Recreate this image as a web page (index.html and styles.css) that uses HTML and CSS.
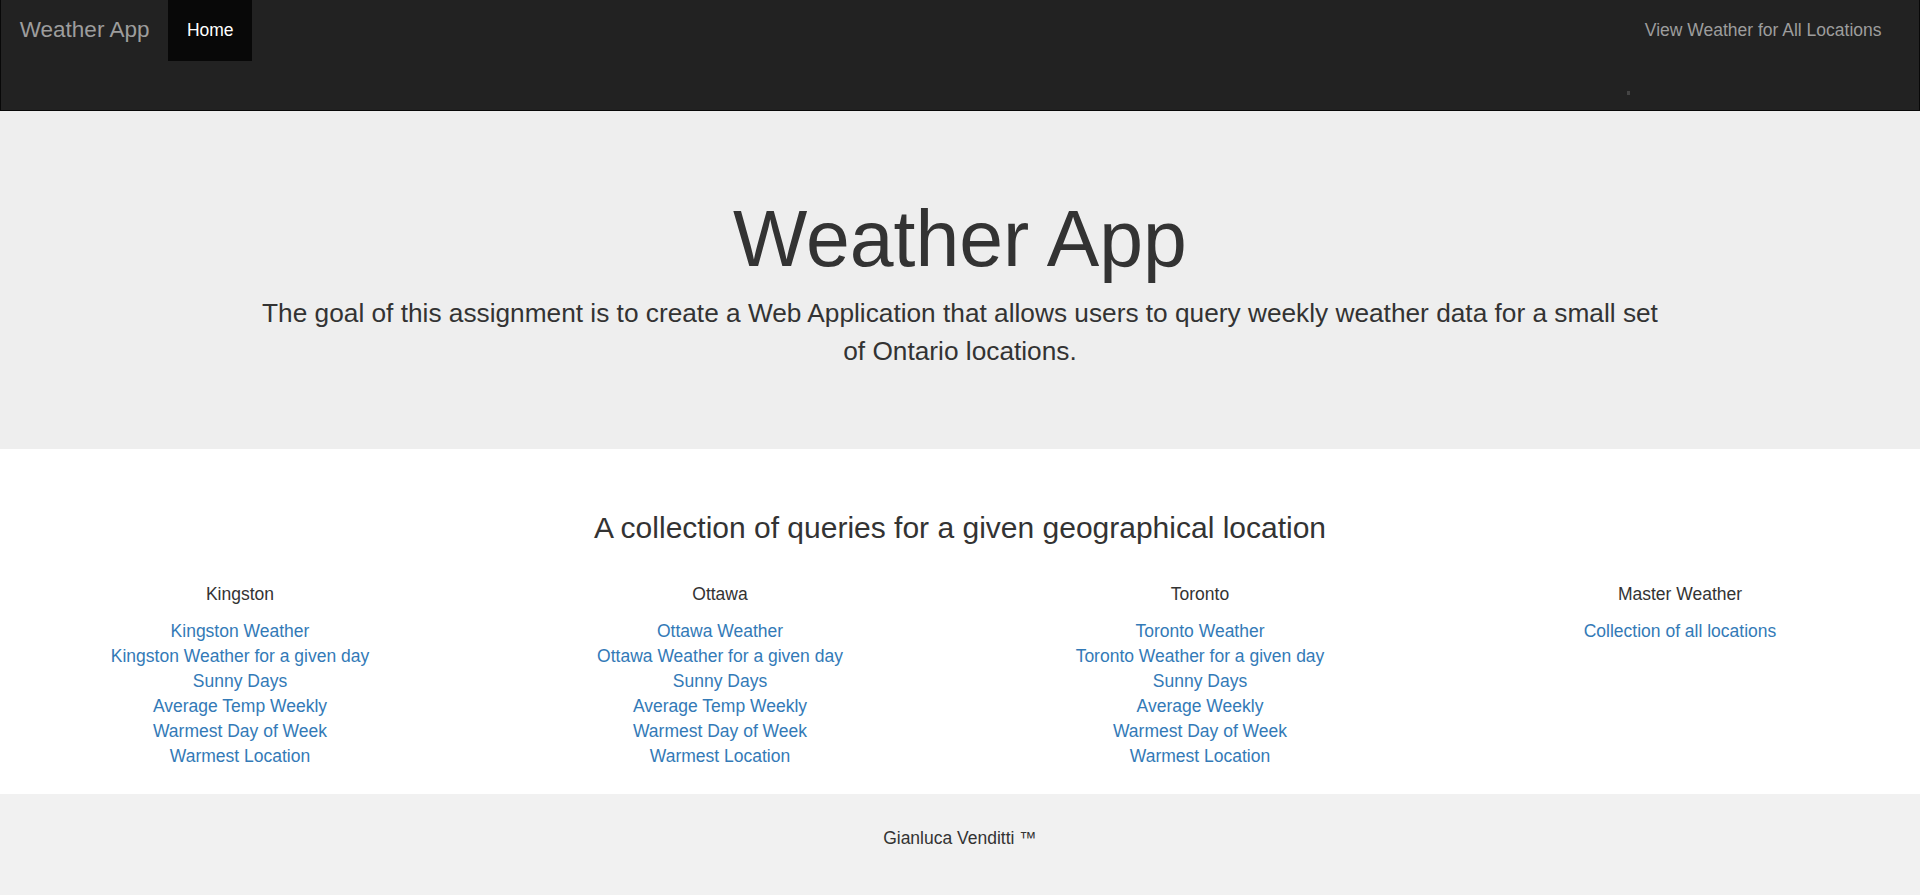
FILE: index.html
```html
<!DOCTYPE html>
<html lang="en">
<head>
<meta charset="utf-8">
<title>Weather App</title>
<link rel="stylesheet" href="styles.css">
</head>
<body>
<nav class="navbar">
  <div class="nav-left">
    <a class="brand" href="#">Weather App</a>
    <a class="nav-link active" href="#">Home</a>
  </div>
  <div class="nav-right">
    <a class="nav-link" href="#">View Weather for All Locations</a>
    <span class="nav-mark"></span>
  </div>
</nav>

<header class="jumbotron">
  <div class="container">
    <h1 class="jumbo-title">Weather App</h1>
    <p class="jumbo-lead">The goal of this assignment is to create a Web Application that allows users to query weekly weather data for a small set of Ontario locations.</p>
  </div>
</header>

<main class="queries">
  <h3 class="queries-title">A collection of queries for a given geographical location</h3>
  <div class="columns">
    <section class="column">
      <p class="column-title">Kingston</p>
      <ul class="link-list">
        <li><a href="#">Kingston Weather</a></li>
        <li><a href="#">Kingston Weather for a given day</a></li>
        <li><a href="#">Sunny Days</a></li>
        <li><a href="#">Average Temp Weekly</a></li>
        <li><a href="#">Warmest Day of Week</a></li>
        <li><a href="#">Warmest Location</a></li>
      </ul>
    </section>
    <section class="column">
      <p class="column-title">Ottawa</p>
      <ul class="link-list">
        <li><a href="#">Ottawa Weather</a></li>
        <li><a href="#">Ottawa Weather for a given day</a></li>
        <li><a href="#">Sunny Days</a></li>
        <li><a href="#">Average Temp Weekly</a></li>
        <li><a href="#">Warmest Day of Week</a></li>
        <li><a href="#">Warmest Location</a></li>
      </ul>
    </section>
    <section class="column">
      <p class="column-title">Toronto</p>
      <ul class="link-list">
        <li><a href="#">Toronto Weather</a></li>
        <li><a href="#">Toronto Weather for a given day</a></li>
        <li><a href="#">Sunny Days</a></li>
        <li><a href="#">Average Weekly</a></li>
        <li><a href="#">Warmest Day of Week</a></li>
        <li><a href="#">Warmest Location</a></li>
      </ul>
    </section>
    <section class="column">
      <p class="column-title">Master Weather</p>
      <ul class="link-list">
        <li><a href="#">Collection of all locations</a></li>
      </ul>
    </section>
  </div>
</main>

<footer class="footer">
  <p class="footer-text">Gianluca Venditti &#8482;</p>
</footer>
</body>
</html>
```

FILE: styles.css
```css
* {
  box-sizing: border-box;
}

html, body {
  margin: 0;
  padding: 0;
}

body {
  font-family: "Liberation Sans", Arial, Helvetica, sans-serif;
  font-size: 17.5px;
  line-height: 25px;
  color: #333;
  background: #fff;
}

a {
  text-decoration: none;
}

/* Navbar */
.navbar {
  display: flex;
  justify-content: space-between;
  align-items: flex-start;
  height: 111px;
  background: #222;
  border-style: solid;
  border-color: #080808;
  border-width: 0 1px 1px 1px;
}

.nav-left {
  display: flex;
}

.brand {
  display: block;
  height: 61px;
  padding: 17px 18.75px 18px 18.75px;
  font-size: 22.5px;
  line-height: 25px;
  color: #9d9d9d;
}

.nav-link {
  display: block;
  height: 61px;
  padding: 18px 18.75px;
  font-size: 17.5px;
  line-height: 25px;
  color: #9d9d9d;
}

.nav-link.active {
  color: #fff;
  background: #080808;
}

.nav-right {
  display: flex;
  flex-direction: column;
  align-items: flex-start;
  margin-right: 18.75px;
}

.nav-mark {
  display: block;
  width: 3px;
  height: 4px;
  margin-top: 30px;
  margin-left: 1px;
  background: #444;
}

/* Jumbotron */
.jumbotron {
  background: #eee;
  padding: 60px 0;
  text-align: center;
}

.container {
  width: 1425px;
  margin: 0 auto;
}

.jumbo-title {
  margin: 25px 0 12.5px;
  font-size: 78.75px;
  line-height: 1.1;
  font-weight: normal;
  color: #333;
}

.jumbo-lead {
  margin: 0 0 18.75px;
  font-size: 26.25px;
  line-height: 37.5px;
  font-weight: normal;
}

/* Queries */
.queries {
  padding-top: 37.5px;
  padding-bottom: 12.5px;
  text-align: center;
}

.queries-title {
  margin: 25px 0 37.5px;
  font-size: 30px;
  line-height: 33px;
  font-weight: normal;
  color: #333;
}

.columns {
  display: grid;
  grid-template-columns: repeat(4, 1fr);
}

.column {
  padding: 0 18.75px;
}

.column-title {
  margin: 0 0 12.5px;
  color: #333;
}

.link-list {
  list-style: none;
  margin: 0 0 12.5px;
  padding: 0;
}

.link-list a {
  color: #337ab7;
}

/* Footer */
.footer {
  background: #f1f1f1;
  padding: 32px 0 80px;
  text-align: center;
}

.footer-text {
  margin: 0;
  color: #333;
}
```
